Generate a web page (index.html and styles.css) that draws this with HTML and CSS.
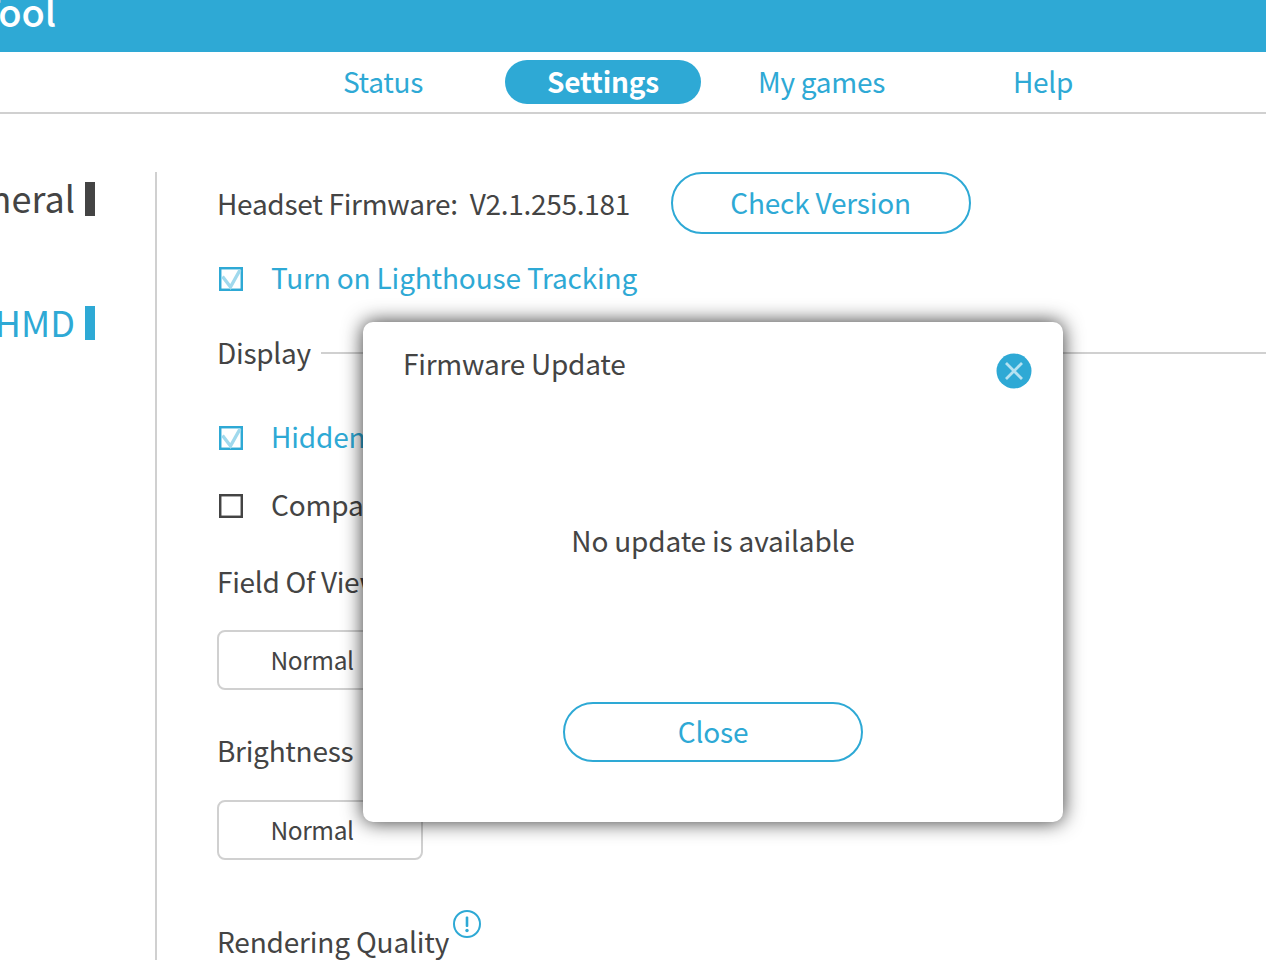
FILE: index.html
```html
<!DOCTYPE html>
<html lang="en">
<head>
<meta charset="utf-8">
<title>Tool</title>
<link rel="stylesheet" href="styles.css">
</head>
<body>
<header class="topbar"><h1 class="app-title">Tool</h1></header>
<nav class="tabs">
  <a class="tab">Status</a>
  <a class="tab tab-active">Settings</a>
  <a class="tab">My games</a>
  <a class="tab">Help</a>
</nav>
<div class="page">
  <aside class="side">
    <div class="side-item side-dark"><span>General</span><i class="side-mark"></i></div>
    <div class="side-item side-blue"><span>HMD</span><i class="side-mark"></i></div>
  </aside>
  <main class="content">
    <div class="row-fw">
      <span class="label">Headset Firmware:&nbsp; V2.1.255.181</span>
      <button class="pill pill-check">Check Version</button>
    </div>
    <div class="check check-first">
      <svg class="box" viewBox="0 0 24 24" width="24" height="24"><rect x="1.2" y="1.2" width="21.6" height="21.6" fill="none" stroke="#2ea9d5" stroke-width="2.5"/><path d="M3.5 9.5 L11.5 20 L21 3" fill="none" stroke="#a0d9ed" stroke-width="3.4"/></svg>
      <span class="blue">Turn on Lighthouse Tracking</span>
    </div>
    <div class="section"><span class="label">Display</span><i class="rule"></i></div>
    <div class="check check-hidden">
      <svg class="box" viewBox="0 0 24 24" width="24" height="24"><rect x="1.2" y="1.2" width="21.6" height="21.6" fill="none" stroke="#2ea9d5" stroke-width="2.5"/><path d="M3.5 9.5 L11.5 20 L21 3" fill="none" stroke="#a0d9ed" stroke-width="3.4"/></svg>
      <span class="blue">Hidden Area Mask</span>
    </div>
    <div class="check check-comp">
      <svg class="box" viewBox="0 0 24 24" width="24" height="24"><rect x="1.2" y="1.2" width="21.6" height="21.6" fill="#fff" stroke="#444" stroke-width="2.5"/></svg>
      <span class="label">Compatibility Mode</span>
    </div>
    <div class="label fov">Field Of View</div>
    <div class="select">Normal</div>
    <div class="label bright">Brightness</div>
    <div class="select">Normal</div>
    <div class="label quality">Rendering Quality<svg class="info" viewBox="0 0 28 28" width="28" height="28"><circle cx="14" cy="14" r="13" fill="none" stroke="#2ea9d5" stroke-width="2"/><rect x="12.7" y="6.5" width="2.6" height="10.5" rx="1" fill="#2ea9d5"/><circle cx="14" cy="20.5" r="1.7" fill="#2ea9d5"/></svg></div>
  </main>
</div>
<section class="modal">
  <div class="modal-head">
    <h2 class="modal-title">Firmware Update</h2>
    <svg class="modal-x" viewBox="0 0 36 36" width="36" height="36"><circle cx="18" cy="18" r="17.5" fill="#2ea9d5"/><path d="M10 10 L26 26 M26 10 L10 26" stroke="#b5e2f1" stroke-width="2.8"/></svg>
  </div>
  <p class="modal-msg">No update is available</p>
  <button class="pill pill-close">Close</button>
</section>
</body>
</html>
```
FILE: styles.css
```css
* { box-sizing: border-box; }
html, body { margin: 0; height: 960px; overflow: hidden; background: #fff; }
body {
  font-family: "Noto Sans CJK TC", "Noto Sans", sans-serif;
  font-size: 28px;
  letter-spacing: -0.28px;
  color: #444;
  position: relative;
}
.topbar { height: 52px; background: #2ea9d5; overflow: hidden; }
.app-title { margin: -15px 0 0 -22px; font-size: 38px; font-weight: 500; line-height: 52px; color: #fff; letter-spacing: -0.1px; }
.tabs {
  height: 62px;
  padding: 8px 0 0 285px;
  display: grid;
  grid-template-columns: repeat(4, 196px);
  column-gap: 24px;
  align-items: start;
  border-bottom: 2px solid #d0d0d0;
}
.tab { height: 44px; line-height: 42px; text-align: center; color: #2ea9d5; border-radius: 22px; }
.tab:nth-child(3) { padding-right: 3px; }
.tab-active { background: #2ea9d5; color: #fff; font-weight: 700; letter-spacing: -0.15px; }
.page { display: flex; padding-top: 58px; }
.side { height: 790px; border-right: 2px solid #d0d0d0; margin-left: -100px; flex: none; width: 257px; padding-top: 9px; }
.side-item { display: flex; justify-content: flex-end; align-items: center; gap: 10px; height: 36px; margin-bottom: 88px; padding-right: 60px; font-size: 36px; letter-spacing: 0; }
.side-item span { margin-bottom: 4px; }
.side-dark { color: #444; }
.side-blue { color: #2ea9d5; }
.side-mark { width: 10px; height: 34px; background: currentColor; }
.content { flex: 1; padding-left: 60px; }
.label { line-height: 42px; color: #444; }
.blue { color: #2ea9d5; }
.row-fw { display: flex; align-items: center; height: 62px; }
.pill { background: #fff; border: 2px solid #2ea9d5; color: #2ea9d5; font: inherit; letter-spacing: -0.2px; padding: 0 0 2px; text-align: center; }
.pill-check { width: 300px; height: 62px; border-radius: 31px; margin-left: 40.5px; }
.check { display: flex; align-items: center; gap: 28px; height: 44px; white-space: nowrap; line-height: 40px; letter-spacing: -0.16px; }
.check span { margin-bottom: 4px; }
.box { flex: none; margin-left: 2px; }
.check-first { margin-top: 23px; }
.section { display: flex; align-items: center; margin-top: 31px; height: 44px; }
.section .label { margin-bottom: 4px; }
.rule { flex: 1; height: 2px; background: #d0d0d0; margin-left: 10px; margin-top: -2px; }
.check-hidden { margin-top: 40px; }
.check-comp { margin-top: 24px; }
.fov { margin-top: 32px; }
.select { width: 206px; height: 60px; margin-top: 28px; line-height: 56px; padding-left: 51.5px; border: 2px solid #d0d0d0; border-radius: 8px; font-size: 24.5px; letter-spacing: -0.4px; }
.bright { margin-top: 39px; }
.bright + .select { margin-top: 29px; }
.quality { margin-top: 60px; white-space: nowrap; letter-spacing: -0.17px; }
.info { vertical-align: top; margin: -10px 0 0 4px; }
.modal {
  position: absolute;
  left: 363px; top: 322px;
  width: 700px; height: 500px;
  background: #fff;
  border-radius: 10px;
  box-shadow: 0 0 20px rgba(0,0,0,.8);
  display: flex;
  flex-direction: column;
  align-items: center;
}
.modal-head { width: 100%; display: flex; justify-content: space-between; padding: 20px 31px 0 40px; }
.modal-title { margin: 0; font-size: 28px; font-weight: 400; line-height: 42px; color: #444; letter-spacing: -0.24px; }
.modal-x { margin-top: 11px; }
.modal-msg { margin: 130px 0 0; line-height: 42px; color: #444; letter-spacing: -0.18px; }
.pill-close { width: 300px; height: 60px; border-radius: 30px; margin-top: 141px; }
```
